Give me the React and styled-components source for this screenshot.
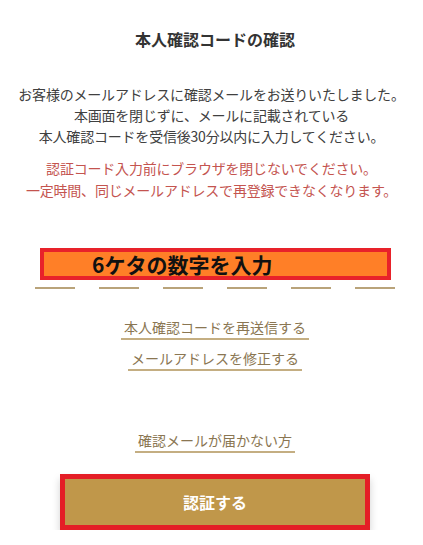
import React from 'react';
import styled, { createGlobalStyle } from 'styled-components';

const GlobalStyle = createGlobalStyle`
  body {
    margin: 0;
    background: #fff;
    font-family: "Noto Sans CJK JP", "Noto Sans", sans-serif;
    color: #333;
  }
`;

const Page = styled.div`
  width: 423px;
  padding-top: 27px;
  box-sizing: border-box;
`;

const Title = styled.h1`
  margin: 0 0 0 7px;
  font-size: 16px;
  line-height: 24px;
  font-weight: 700;
  text-align: center;
  color: #333;
`;

const Message = styled.p`
  margin: ${(p) => p.$top}px 0 0;
  font-size: 14px;
  line-height: ${(p) => (p.$warn ? 22 : 21)}px;
  text-align: center;
  color: ${(p) => (p.$warn ? '#c4544f' : '#404040')};
  letter-spacing: -0.2px;
`;

const CodeArea = styled.div`
  margin-top: 47px;
  display: flex;
  flex-direction: column;
`;

const Highlight = styled.div`
  margin-left: 40px;
  width: 351px;
  height: 32px;
  box-sizing: border-box;
  border: 4px solid #e8222a;
  background: #ff7f27;
  padding-left: 48px;
  font-size: 21px;
  line-height: 24px;
  font-weight: 700;
  color: #111;
`;

const Digits = styled.div`
  display: flex;
  gap: 24px;
  padding-left: 35px;
  margin-top: 7px;
`;

const Digit = styled.span`
  width: 40px;
  height: 2px;
  background: #b9a37a;
`;

const Links = styled.div`
  display: flex;
  flex-direction: column;
  align-items: center;
  padding-left: 7px;
  margin-top: ${(p) => p.$top}px;
  gap: ${(p) => p.$gap || 0}px;
`;

const TextLink = styled.a`
  display: inline-block;
  padding: 0 3px 1px;
  font-size: 14px;
  line-height: 20px;
  color: #8a7652;
  text-decoration: none;
  border-bottom: 2px solid #c4ae82;
  cursor: pointer;
`;

const Submit = styled.button`
  display: block;
  margin: 0 0 0 60px;
  width: 310px;
  height: 56px;
  box-sizing: border-box;
  border: 5px solid #e41e26;
  background: #c0974a;
  color: #fff;
  font-family: inherit;
  font-size: 16px;
  font-weight: 700;
  box-shadow: 0 5px 8px rgba(0, 0, 0, 0.18);
  cursor: pointer;
`;

const SubmitWrap = styled.div`
  margin-top: 21px;
`;

export default function App() {
  return (
    <>
      <GlobalStyle />
      <Page>
        <Title>本人確認コードの確認</Title>
        <Message $top={33}>
          お客様のメールアドレスに確認メールをお送りいたしました。
          <br />
          本画面を閉じずに、メールに記載されている
          <br />
          本人確認コードを受信後30分以内に入力してください。
        </Message>
        <Message $top={10} $warn>
          認証コード入力前にブラウザを閉じないでください。
          <br />
          一定時間、同じメールアドレスで再登録できなくなります。
        </Message>
        <CodeArea>
          <Highlight>6ケタの数字を入力</Highlight>
          <Digits>
            {[0, 1, 2, 3, 4, 5].map((i) => (
              <Digit key={i} />
            ))}
          </Digits>
        </CodeArea>
        <Links $top={28} $gap={8}>
          <TextLink>本人確認コードを再送信する</TextLink>
          <TextLink>メールアドレスを修正する</TextLink>
        </Links>
        <Links $top={59}>
          <TextLink>確認メールが届かない方</TextLink>
        </Links>
        <SubmitWrap>
          <Submit>認証する</Submit>
        </SubmitWrap>
      </Page>
    </>
  );
}
